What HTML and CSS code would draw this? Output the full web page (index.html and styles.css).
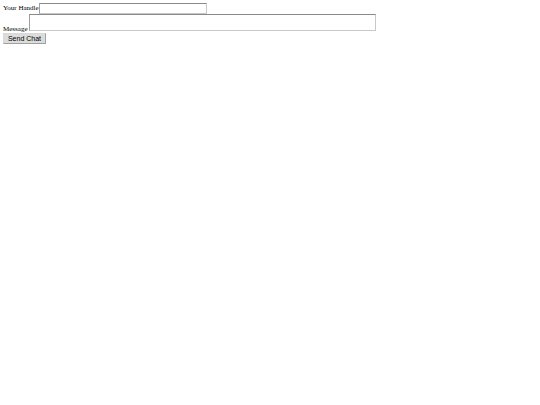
FILE: index.html
```html
<!DOCTYPE html>
<html>
<head>
<meta charset="utf-8">
<link rel="stylesheet" href="styles.css">
</head>
<body>
<form class="chat-form">
  <div class="row">
    <label class="label">Your Handle</label><input class="handle" type="text">
  </div>
  <div class="row">
    <label class="label">Message</label><textarea class="message"></textarea>
  </div>
  <div class="row">
    <button class="send" type="button">Send Chat</button>
  </div>
</form>
</body>
</html>
```
FILE: styles.css
```css
html, body {
  margin: 0;
  padding: 0;
  background: #fff;
}
body {
  padding: 3px;
  font-family: "Liberation Serif", "Times New Roman", serif;
  font-size: 7px;
  color: #000;
}
.chat-form {
  margin: 0;
}
.row {
  display: block;
  line-height: 8px;
}
.label {
  margin-right: 0;
}
.handle {
  box-sizing: border-box;
  width: 168px;
  height: 11px;
  margin: 0;
  padding: 0;
  border: 1px solid #c8c8c8;
  border-top-color: #8a8a8a;
  border-left-color: #a0a0a0;
  vertical-align: -1px;
  font-size: 7px;
}
.message {
  box-sizing: border-box;
  width: 347px;
  height: 17px;
  margin: 0 0 0 1px;
  padding: 0;
  border: 1px solid #c8c8c8;
  border-top-color: #8a8a8a;
  border-left-color: #a0a0a0;
  resize: none;
  vertical-align: baseline;
  font-size: 7px;
}
.send {
  box-sizing: border-box;
  margin: 0;
  width: 43px;
  height: 11px;
  padding: 0;
  font-family: "Liberation Sans", Arial, sans-serif;
  font-size: 7px;
  line-height: 9px;
  color: #000;
  background: #dcdcdc;
  border: 1px solid #a0a0a0;
  border-top-color: #d8d8d8;
  border-left-color: #d8d8d8;
}
```
